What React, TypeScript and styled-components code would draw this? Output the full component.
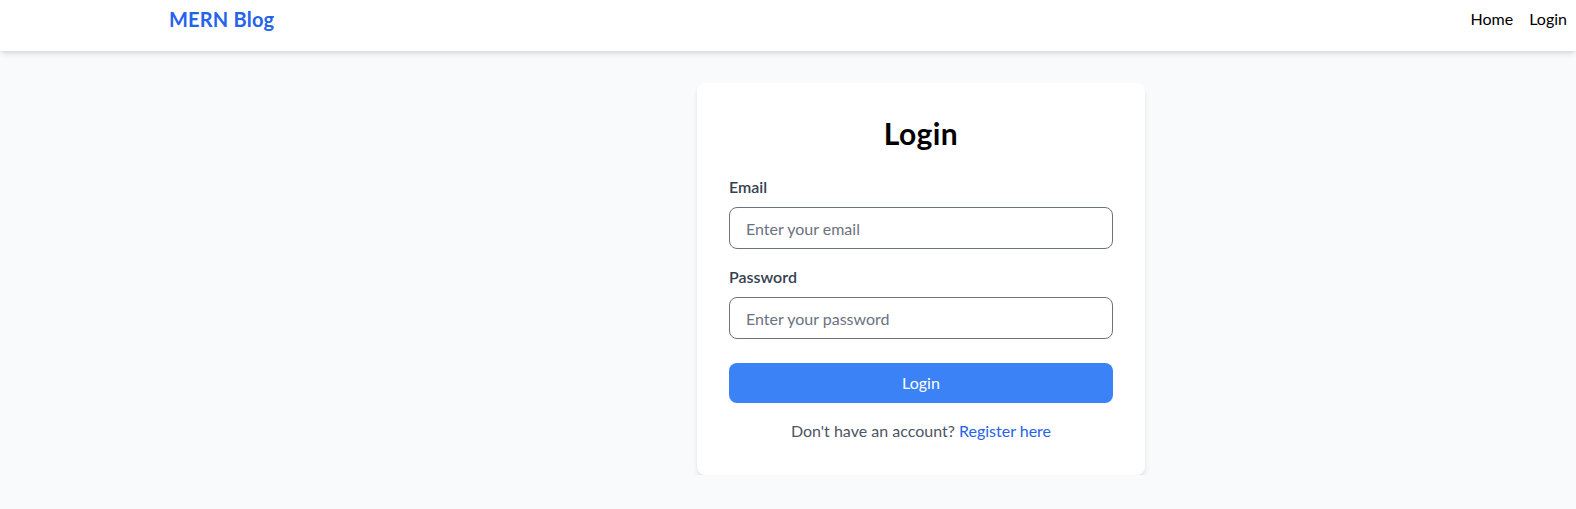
import React from "react";
import styled, { createGlobalStyle } from "styled-components";

const GlobalStyle = createGlobalStyle`
  * { box-sizing: border-box; }
  html, body { margin: 0; padding: 0; }
  body {
    background: #f9fafb;
    font-family: Lato, "Noto Sans", sans-serif;
    color: #111827;
  }
`;

const Nav = styled.nav`
  height: 51px;
  background: #ffffff;
  box-shadow: 0 4px 6px -1px rgba(0, 0, 0, 0.1), 0 2px 4px -2px rgba(0, 0, 0, 0.1);
  display: flex;
  justify-content: space-between;
  align-items: flex-start;
  padding: 0 9px 0 169px;
  position: relative;
`;

const Brand = styled.a`
  font-size: 20px;
  line-height: 28px;
  font-weight: 700;
  letter-spacing: 0.2px;
  color: #2563eb;
  text-decoration: none;
  padding-top: 5px;
`;

const Links = styled.div`
  display: flex;
  gap: 16px;
  padding-top: 7px;
`;

const NavLink = styled.a`
  font-size: 16px;
  line-height: 24px;
  color: #000000;
  text-decoration: none;
`;

const Main = styled.main`
  display: flex;
  justify-content: center;
  padding: 32px 0 0 266px;
`;

const Card = styled.div`
  width: 448px;
  background: #ffffff;
  border-radius: 8px;
  padding: 32px;
  box-shadow: 0 4px 6px -1px rgba(0, 0, 0, 0.1), 0 2px 4px -2px rgba(0, 0, 0, 0.1);
`;

const Title = styled.h1`
  margin: 0 0 24px;
  font-size: 30px;
  line-height: 36px;
  font-weight: 700;
  letter-spacing: 0.4px;
  text-align: center;
  color: #000000;
`;

const Field = styled.div<{ $gap: number }>`
  display: flex;
  flex-direction: column;
  margin-bottom: ${(p) => p.$gap}px;
`;

const Label = styled.label`
  font-size: 16px;
  line-height: 24px;
  font-weight: 600;
  color: #374151;
  margin-bottom: 8px;
`;

const Input = styled.input`
  width: 100%;
  height: 42px;
  padding: 8px 16px;
  border: 1px solid #6b7280;
  border-radius: 8px;
  font-family: inherit;
  font-size: 16px;
  line-height: 24px;
  color: #111827;
  background: #ffffff;
  outline: none;
  &::placeholder {
    color: #6b7280;
  }
`;

const Button = styled.button`
  width: 100%;
  height: 40px;
  border: none;
  border-radius: 8px;
  background: #3b82f6;
  color: #ffffff;
  font-family: inherit;
  font-size: 16px;
  line-height: 24px;
  cursor: pointer;
`;

const Footer = styled.p`
  margin: 16px 0 0;
  text-align: center;
  font-size: 16px;
  line-height: 24px;
  color: #4b5563;
`;

const Register = styled.a`
  color: #2563eb;
  text-decoration: none;
`;

export default function App() {
  return (
    <>
      <GlobalStyle />
      <Nav>
        <Brand href="#">MERN Blog</Brand>
        <Links>
          <NavLink href="#">Home</NavLink>
          <NavLink href="#">Login</NavLink>
        </Links>
      </Nav>
      <Main>
        <Card>
          <Title>Login</Title>
          <form onSubmit={(e) => e.preventDefault()}>
            <Field $gap={16}>
              <Label htmlFor="email">Email</Label>
              <Input id="email" type="email" placeholder="Enter your email" />
            </Field>
            <Field $gap={24}>
              <Label htmlFor="password">Password</Label>
              <Input id="password" type="password" placeholder="Enter your password" />
            </Field>
            <Button type="submit">Login</Button>
          </form>
          <Footer>
            Don't have an account? <Register href="#">Register here</Register>
          </Footer>
        </Card>
      </Main>
    </>
  );
}
